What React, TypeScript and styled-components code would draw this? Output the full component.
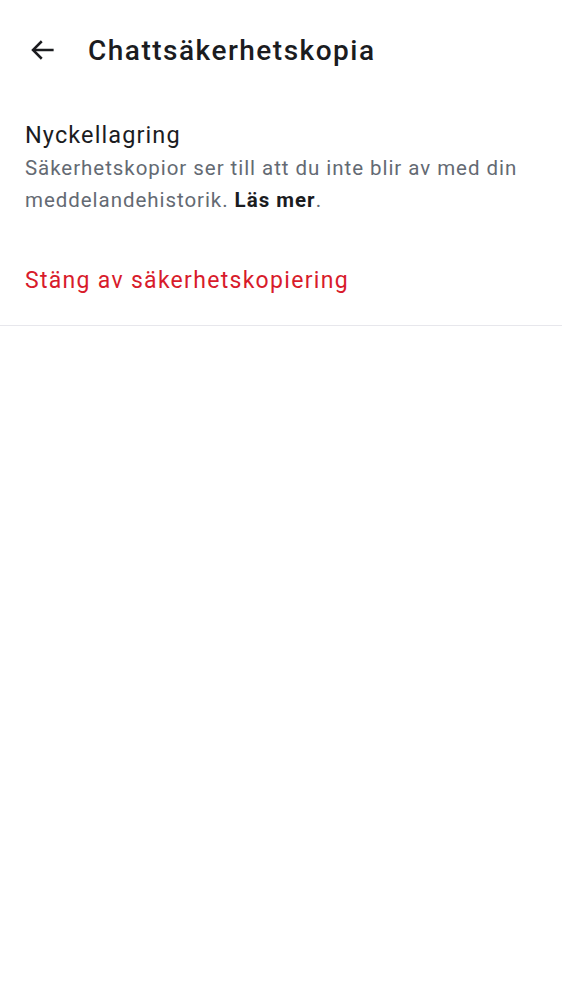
import React from "react";
import styled, { createGlobalStyle } from "styled-components";

const Global = createGlobalStyle`
  html, body { margin: 0; padding: 0; background: #ffffff; }
  body { font-family: Roboto, "Noto Sans", sans-serif; -webkit-font-smoothing: antialiased; }
`;

const Page = styled.div`
  width: 562px;
  min-height: 1000px;
  background: #ffffff;
  display: flex;
  flex-direction: column;
`;

const Toolbar = styled.header`
  height: 100px;
  display: flex;
  align-items: center;
  padding: 0 0 0 26px;
  gap: 28px;
  box-sizing: border-box;
`;

const BackButton = styled.button`
  width: 34px;
  height: 34px;
  border: none;
  background: none;
  padding: 0;
  display: flex;
  align-items: center;
  justify-content: center;
  color: #1b1c1f;
`;

const Title = styled.h1`
  margin: 0;
  font-size: 28px;
  font-weight: 500;
  color: #1b1c1f;
  letter-spacing: 1.5px;
`;

const Section = styled.section`
  padding: 19px 25px 0 25px;
  display: flex;
  flex-direction: column;
`;

const ItemTitle = styled.div`
  font-size: 23.5px;
  line-height: 33px;
  color: #1b1c1f;
  letter-spacing: 1.1px;
`;

const ItemText = styled.div`
  font-size: 20.5px;
  line-height: 32px;
  color: #646a73;
  letter-spacing: 0.95px;
`;

const Strong = styled.b`
  font-weight: 700;
  color: #1b1c1f;
  letter-spacing: 1px;
`;

const DangerRow = styled.div`
  padding: 48px 25px 28px 25px;
  font-size: 23px;
  line-height: 33px;
  color: #d81b2b;
  letter-spacing: 1.3px;
  border-bottom: 1px solid #e7e7ec;
`;

export default function App() {
  return (
    <>
      <Global />
      <Page>
        <Toolbar>
          <BackButton aria-label="Tillbaka">
            <svg width="30" height="30" viewBox="0 0 24 24" fill="none" stroke="currentColor" strokeWidth="2" strokeLinecap="butt">
              <path d="M20.5 12H4.5" />
              <path d="M11 5l-7 7 7 7" />
            </svg>
          </BackButton>
          <Title>Chattsäkerhetskopia</Title>
        </Toolbar>
        <Section>
          <ItemTitle>Nyckellagring</ItemTitle>
          <ItemText>
            Säkerhetskopior ser till att du inte blir av med din meddelandehistorik. <Strong>Läs mer</Strong>.
          </ItemText>
        </Section>
        <DangerRow>Stäng av säkerhetskopiering</DangerRow>
      </Page>
    </>
  );
}
